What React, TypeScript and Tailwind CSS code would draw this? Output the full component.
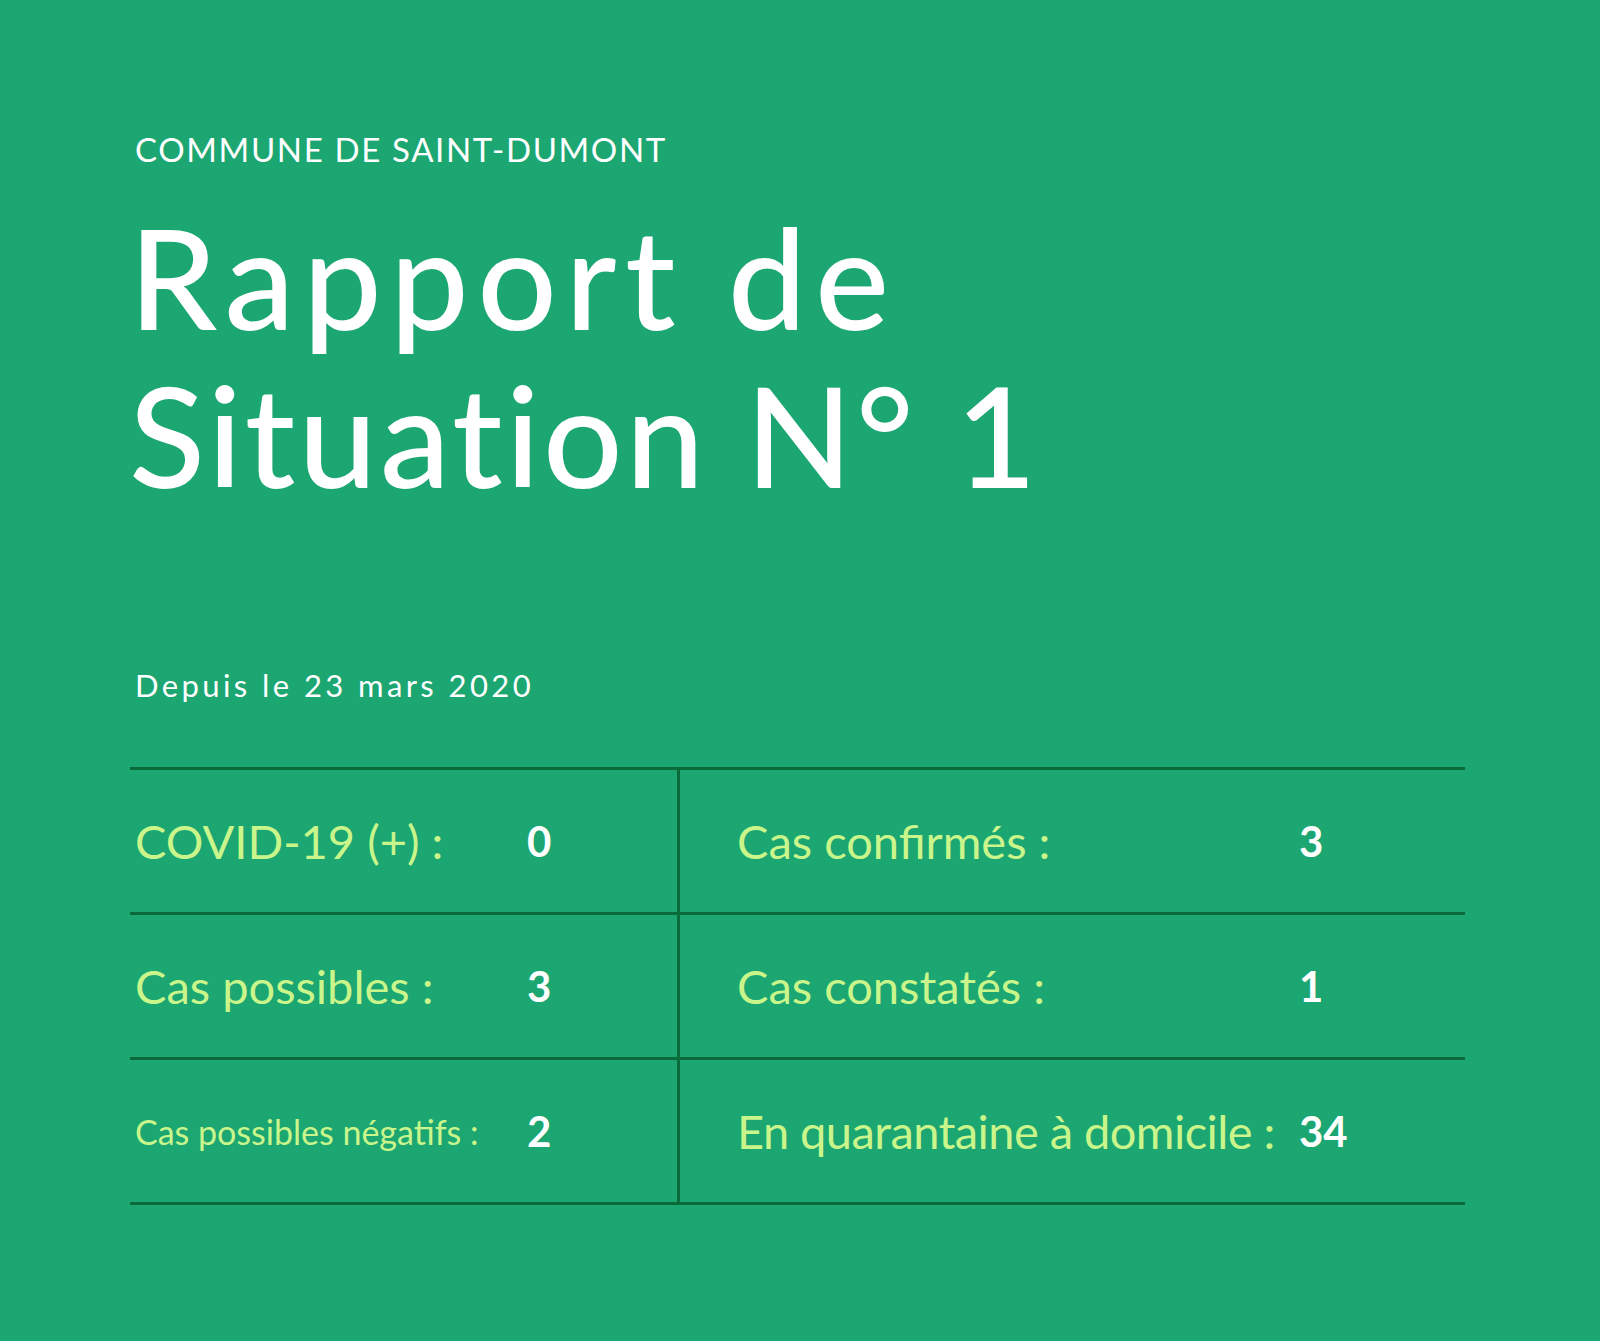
const rows: [string, string, string, string, boolean][] = [
  ["COVID-19 (+) :", "0", "Cas confirmés :", "3", false],
  ["Cas possibles :", "3", "Cas constatés :", "1", false],
  ["Cas possibles négatifs :", "2", "En quarantaine à domicile :", "34", true],
];

export default function App() {
  return (
    <div className="w-[1600px] h-[1341px] bg-[#1ba672] overflow-hidden font-['Lato',sans-serif]">
      <div className="pt-[129px] pl-[135px]">
        <p className="text-[33px] leading-[40px] tracking-[0.05em] text-white">
          COMMUNE DE SAINT-DUMONT
        </p>
        <h1 className="mt-[28px] -ml-[6px] text-[140px] leading-[158px] font-medium [font-variant-ligatures:none] text-white">
          <span className="block tracking-[0.06em]">Rapport de</span>
          <span className="block tracking-[0.022em]">Situation N° 1</span>
        </h1>
        <p className="mt-[154px] text-[31px] leading-[36px] tracking-[0.11em] text-white">
          Depuis le 23 mars 2020
        </p>
      </div>

      <div className="mt-[64px] ml-[130px] w-[1335px] border-b-[3px] border-[#0b6a3a]">
        {rows.map(([l1, v1, l2, v2, small]) => (
          <div
            key={l1}
            className="grid grid-cols-[547px_1fr] h-[145px] border-t-[3px] border-[#0b6a3a]"
          >
            <div className="flex items-center pl-[5px]">
              <span
                className={`w-[392px] whitespace-nowrap text-[#c9f58b] ${
                  small ? "text-[34px]" : "text-[47px]"
                }`}
              >
                {l1}
              </span>
              <span className="text-[42px] font-bold text-white">{v1}</span>
            </div>
            <div className="flex items-center pl-[57px] border-l-[3px] border-[#0b6a3a]">
              <span
                className={`w-[562px] whitespace-nowrap text-[47px] text-[#c9f58b] ${
                  small ? "tracking-[-0.012em]" : ""
                }`}
              >
                {l2}
              </span>
              <span className="text-[42px] font-bold text-white">{v2}</span>
            </div>
          </div>
        ))}
      </div>
    </div>
  );
}
